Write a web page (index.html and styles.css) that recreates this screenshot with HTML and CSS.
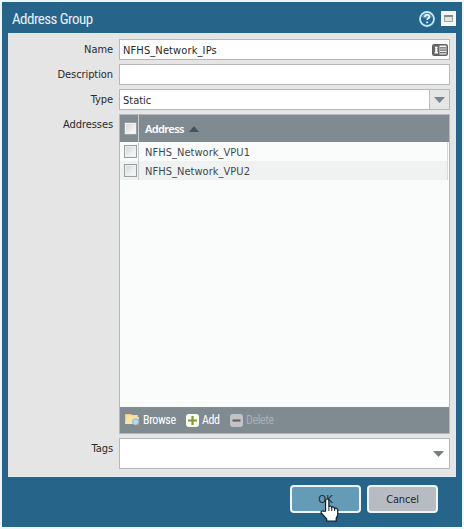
FILE: index.html
```
<!DOCTYPE html>
<html lang="en">
<head>
<meta charset="utf-8">
<title>Address Group</title>
<link rel="stylesheet" href="styles.css">
</head>
<body>
<main class="dialog">
  <header class="titlebar">
    <h1 class="title">Address Group</h1>
    <svg class="help" viewBox="0 0 16 16"><circle cx="8" cy="8" r="7" fill="#246697" stroke="#c3eafa" stroke-width="1.8"/><path d="M3 6a5.3 5.3 0 0 1 10 0q-5 3-10 0" fill="#599bc0"/><path d="M5.9 6q0-2.1 2.2-2.1t2.2 1.9q0 1.1-1.2 1.8-.9.6-.9 1.5" fill="none" stroke="#fff" stroke-width="1.7"/><path d="M7.3 10.5h1.8v1.7H7.3z" fill="#fff"/></svg>
    <svg class="window" viewBox="0 0 15 15"><path fill="#f5f7f4" d="M0 0h15v15H0z"/><path d="M3.5 4.5h8v6h-8z" fill="#e3e5df" stroke="#a0a5a0"/><path d="M3 4h9v2H3z" fill="#858c87"/></svg>
  </header>
  <section class="form">
    <label class="label">Name</label>
    <div class="field"><span class="value name">NFHS_Network_IPs</span>
      <svg class="card" viewBox="0 0 16 12"><rect x=".8" y=".8" width="14.4" height="10.4" rx="1.4" fill="#f4f4f4" stroke="#606060" stroke-width="1.6"/><path d="M1 1h6.5v10H1z" fill="#686868"/><circle cx="4.3" cy="3.7" r="1.3" fill="#fff"/><path d="M3.2 5h2.2v4H3.2z M2.6 8h3.4v1.5H2.6z" fill="#fff"/><path d="M8 3.8h6M8 6.2h6M8 8.6h6" stroke="#666" stroke-width="1.3"/></svg>
    </div>
    <label class="label">Description</label>
    <div class="field"></div>
    <label class="label">Type</label>
    <div class="field"><span class="value static">Static</span><span class="trigger"><svg class="arrow" viewBox="0 0 11 6"><path d="M0 0h11L5.5 6z" fill="#748891"/></svg></span></div>
    <label class="label">Addresses</label>
    <div class="grid">
      <div class="grid-head"><span class="check-cell"><i class="check"></i></span><b class="head-text">Address</b><svg class="sort" viewBox="0 0 10 6"><path d="M0 6l5-6 5 6z" fill="#42545e"/></svg></div>
      <div class="row"><span class="check-cell"><i class="check"></i></span><span class="address">NFHS_Network_VPU1</span></div>
      <div class="row alternate"><span class="check-cell"><i class="check"></i></span><span class="address">NFHS_Network_VPU2</span></div>
      <div class="empty"></div>
      <div class="toolbar">
        <svg class="folder" viewBox="0 0 16 14"><path d="M0 1h6l1 1h6v9H0z" fill="#efca7c"/><path d="M2 4h12l-1 7H0z" fill="#fae3a6"/><path d="M1 3h11" stroke="#fff1bd"/><path d="M12.2 11l2.6 2.6" stroke="#b5826c" stroke-width="1.8"/><circle cx="10.6" cy="8.8" r="3.1" fill="#b6d9e7" stroke="#8db9d0"/></svg><span class="action browse">Browse</span>
        <svg class="plus" viewBox="0 0 13 13"><rect width="13" height="13" rx="3" fill="#fbfcf0"/><path d="M2 6.5h9M6.5 2v9" stroke="#82983c" stroke-width="2.2"/></svg><span class="action add">Add</span>
        <svg class="minus" viewBox="0 0 13 13"><rect width="13" height="13" rx="3" fill="#c1c4c6"/><path d="M2.5 6.5h8" stroke="#765e5c" stroke-width="2.2"/></svg><span class="action delete">Delete</span>
      </div>
    </div>
    <label class="label">Tags</label>
    <div class="field tags"><svg class="arrow" viewBox="0 0 11 6"><path d="M0 0h11L5.5 6z" fill="#747d80"/></svg></div>
  </section>
  <footer class="footer">
    <button class="button ok"><span class="ok-text">OK</span><svg class="cursor" viewBox="0 0 18 24" preserveAspectRatio="none"><path d="M5 13V3Q5 1 6.5 1T8 3v6q0-1 1.2-1t1.3 1.5Q11 8.6 12 9t1.2 1.7q.5-.8 1.5-.4T16 12v5l-1.4 3.2V23H6v-2L1.3 15.2q-.9-1.2.2-2t2.2.2z" fill="#fff" stroke="#101d25" stroke-width="1.1"/><path d="M8 9v4m2.6-3.5V13m2.6-2.3V13" stroke="#101d25" stroke-width=".9"/></svg></button>
    <button class="button cancel">Cancel</button>
  </footer>
</main>
</body>
</html>
```
FILE: styles.css
```
* { box-sizing: border-box; }
body { margin: 0; padding: 2px; width: 464px; height: 529px; overflow: hidden; background: #edf6fc; color: #292929; font: 11px/15px "DejaVu Sans Condensed", "DejaVu Sans", sans-serif; font-stretch: condensed; }
svg { display: block; flex: none; }
.dialog { height: 525px; padding: 0 6px; background: #276489; }
.titlebar { display: flex; align-items: center; height: 31px; padding: 2px 0 0 4px; }
.title { flex: 1; margin: 0; color: #e7f2f8; font: 400 15px/20px Roboto, sans-serif; font-stretch: condensed; letter-spacing: -.54px; }
.help { width: 16px; height: 16px; margin-right: 6px; }
.window { width: 15px; height: 15px; }
.form { display: grid; grid-template-columns: 105px 331px; grid-template-rows: 21px 21px 21px 320px 31px; column-gap: 6px; row-gap: 4px; height: 444px; padding-top: 6px; background: #e5e5e5; border-right: 1px solid #dceaf4; border-bottom: 1px solid #dceaf4; }
.label { padding-top: 3px; text-align: right; white-space: nowrap; letter-spacing: -.08px; }
.field { display: flex; align-items: center; border: 1px solid #b5b8ba; background: #fff; }
.value { flex: 1; padding: 1px 0 0 3px; white-space: nowrap; }
.name { letter-spacing: .12px; }
.card { width: 16px; height: 12px; margin-right: 1px; }
.trigger { display: flex; align-items: center; justify-content: center; width: 20px; height: 19px; background: #e5e7e7; border-left: 1px solid #b9bec0; }
.arrow { width: 11px; height: 6px; }
.grid { display: flex; flex-direction: column; border: 1px solid #b5b9bc; background: #fafcfc; }
.grid-head { display: flex; align-items: center; height: 27px; background: #808b91; color: #fff; }
.check-cell { display: flex; align-items: center; align-self: stretch; width: 19px; padding-left: 4px; border-right: 1px solid #c8cdd0; }
.check { width: 13px; height: 13px; border: 1px solid #9a9fa1; background: linear-gradient(135deg, #d2d4d5, #fff); box-shadow: inset 0 0 0 1px #f0f0f0; }
.head-text { margin-left: 6px; font: 600 11px/15px "Noto Sans", sans-serif; font-stretch: condensed; letter-spacing: -.6px; }
.sort { width: 10px; height: 6px; margin-left: 5px; }
.row { display: flex; align-items: center; height: 19px; margin-right: 1px; border-right: 1px solid #d6d9db; color: #42494c; }
.alternate { background: #f0f2f2; }
.address { padding: 2px 0 0 6px; white-space: nowrap; letter-spacing: .04px; }
.empty { flex: 1; }
.toolbar { display: flex; align-items: center; height: 26px; padding-left: 5px; background: #808b91; color: #fff; font: 12px/16px Roboto, sans-serif; font-stretch: condensed; letter-spacing: -.4px; }
.folder { width: 16px; height: 14px; margin-right: 2px; }
.plus, .minus { width: 13px; height: 13px; }
.action { padding-left: 3px; white-space: nowrap; }
.browse { width: 43px; padding-left: 0; }
.add { width: 31px; }
.delete { color: #a9b0b4; }
.tags { justify-content: flex-end; padding-right: 5px; }
.footer { display: flex; justify-content: flex-end; gap: 6px; padding: 8px 18px 0 0; }
.button { position: relative; width: 71px; height: 28px; padding: 1px 0 0; border: 2px solid #eef5f9; border-radius: 4px; background: #b8bbc2; color: #20272b; font: 11px/15px "DejaVu Sans Condensed", "DejaVu Sans", sans-serif; font-stretch: condensed; }
.cancel { letter-spacing: -.15px; }
.ok { background: #669bb8; }
.cursor { position: absolute; left: 28px; top: 11px; width: 20px; height: 24px; }
```
